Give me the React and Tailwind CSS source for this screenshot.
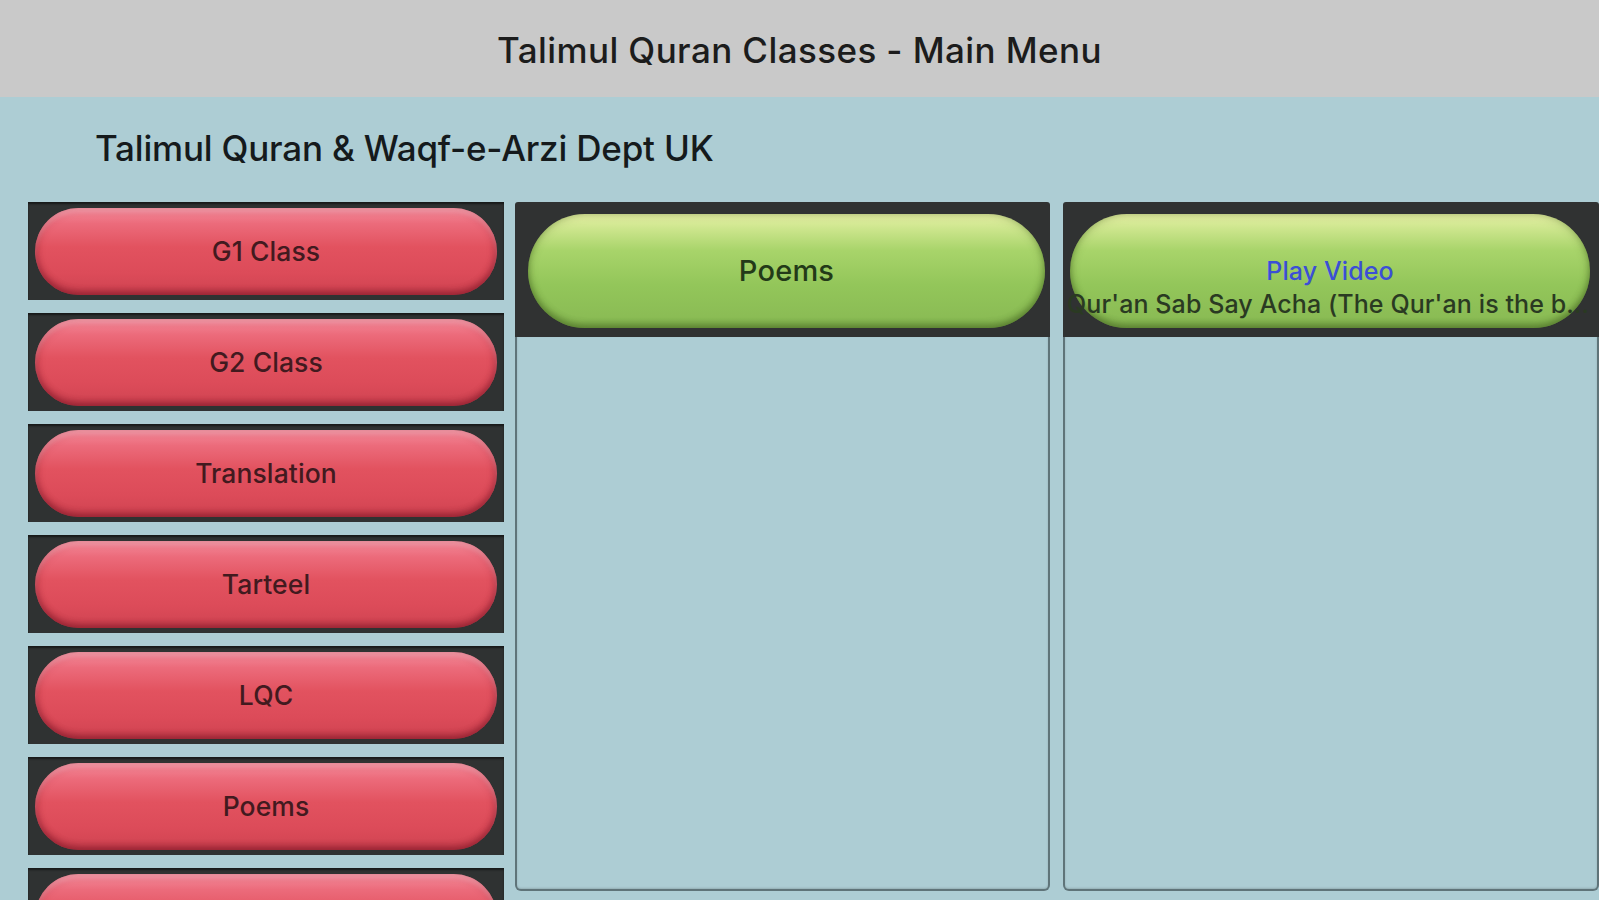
import React from "react";

const classes = ["G1 Class", "G2 Class", "Translation", "Tarteel", "LQC", "Poems", ""];

function RedPill({ label }) {
  return (
    <div className="h-[98px] bg-[#2f3232] px-[7px] pt-[6px] pb-[5px] shadow-[inset_0_2px_2px_rgba(0,0,0,0.5)]">
      <div
        className="
        h-full
        rounded-full
        flex
        items-center
        justify-center
        bg-[linear-gradient(to_bottom,#f48b9b_0%,#ec6b7b_18%,#e2525f_45%,#dc4b59_75%,#cf4351_100%)]
        shadow-[inset_0_-4px_6px_rgba(110,15,30,0.45),inset_0_4px_4px_rgba(255,190,200,0.45),inset_0_0_10px_rgba(130,20,40,0.45)]
        text-[26.5px]
        font-medium
        tracking-[0.1px]
        text-[#421a1f]"
      >
        {label}
      </div>
    </div>
  );
}

function GreenPill({ children }) {
  return (
    <div
      className="
      h-[114px]
      rounded-full
      bg-[linear-gradient(to_bottom,#eaf3a8_0%,#d2e892_10%,#a8d46a_32%,#93c65a_62%,#88b953_100%)]
      shadow-[inset_0_-4px_6px_rgba(50,80,20,0.4),inset_0_0_10px_rgba(60,90,25,0.4)]"
    >
      {children}
    </div>
  );
}

function Panel({ className, bandClass, children }) {
  return (
    <div className={"flex flex-col h-[689px] shrink-0 " + className}>
      <div className={"h-[135px] bg-[#303232] pt-[12px] rounded-t-[3px] " + bandClass}>{children}</div>
      <div className="flex-1 border-2 border-t-0 border-[#5f7479] rounded-b-[6px] shadow-[inset_0_-1px_2px_rgba(0,0,0,0.15)]" />
    </div>
  );
}

export default function App() {
  return (
    <div className="h-[900px] w-[1599px] overflow-hidden bg-[#adcdd4] font-['Inter',sans-serif]">
      <div className="h-[97px] bg-[#c9c9c9] flex items-center justify-center pt-[4px] text-[35px] font-medium text-[#1c1c1c] tracking-[0.4px]">
        Talimul Quran Classes - Main Menu
      </div>

      <div className="pl-[95px] pt-[31px] h-[105px] text-[35px] font-medium leading-[40px] text-[#151a1c] tracking-[-0.2px]">
        Talimul Quran &amp; Waqf-e-Arzi Dept UK
      </div>

      <div className="flex pl-[28px]">
        <div className="w-[476px] shrink-0 flex flex-col gap-[13px]">
          {classes.map((c, i) => (
            <RedPill key={i} label={c} />
          ))}
        </div>

        <Panel className="ml-[11px] w-[535px]" bandClass="pl-[13px] pr-[5px]">
          <GreenPill>
            <div className="h-full flex items-center justify-center text-[29px] font-medium tracking-[0.2px] text-[#233a18]">
              Poems
            </div>
          </GreenPill>
        </Panel>

        <Panel className="ml-[13px] w-[536px]" bandClass="pl-[7px] pr-[9px]">
          <GreenPill>
            <div className="h-full flex flex-col items-start pt-[42px]">
              <div className="w-full text-center text-[25px] font-medium leading-[30px] tracking-[0.1px] text-[#3b4fd6]">
                Play Video
              </div>
              <div className="w-[530px] -ml-[3px] mt-[3px] truncate text-[25px] font-medium leading-[30px] tracking-[0.1px] text-[#2a3a22]">
                Qur'an Sab Say Acha (The Qur'an is the best book)
              </div>
            </div>
          </GreenPill>
        </Panel>
      </div>
    </div>
  );
}
